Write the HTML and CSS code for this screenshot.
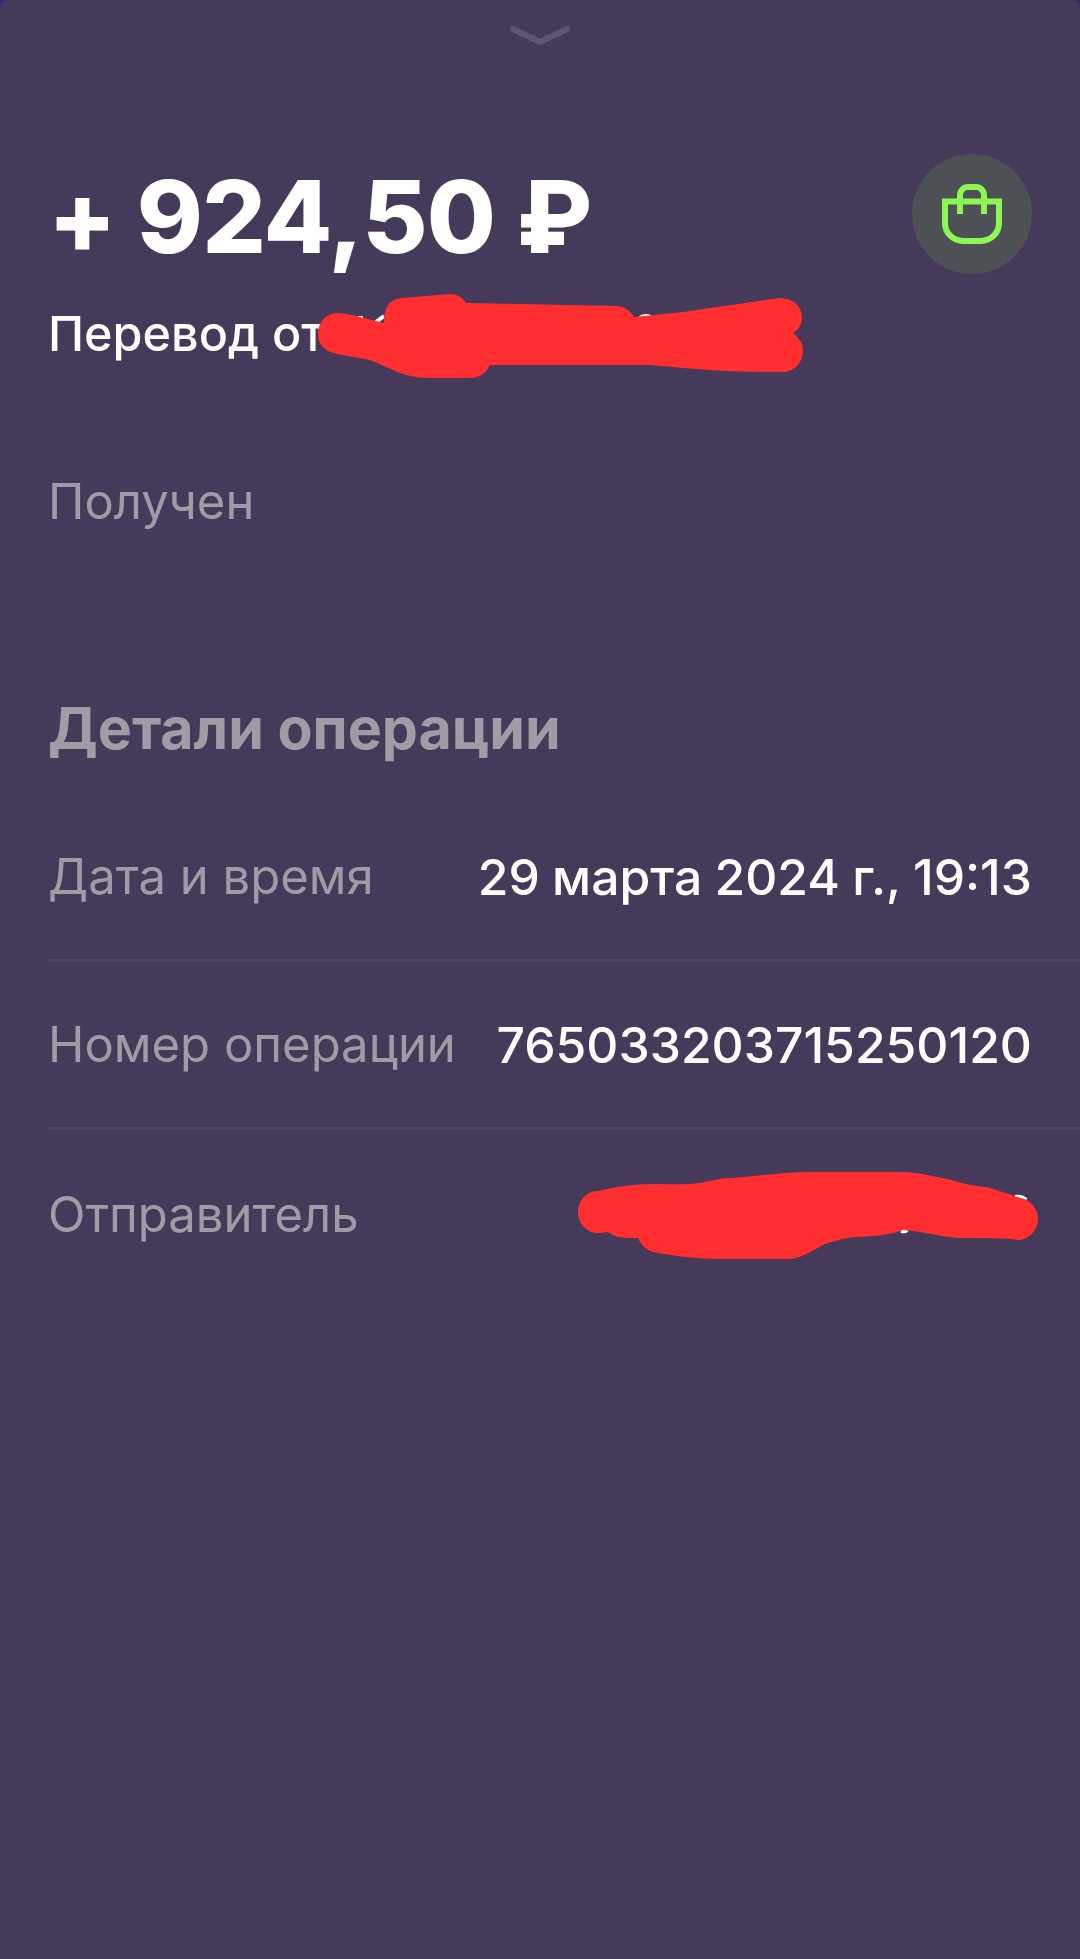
FILE: index.html
```html
<!DOCTYPE html>
<html lang="ru">
<head>
<meta charset="utf-8">
<title>Детали операции</title>
<link rel="stylesheet" href="styles.css">
</head>
<body>
<main class="sheet">
  <div class="grabber">
    <svg class="chevron" width="64" height="24" viewBox="0 0 64 24"><path d="M5 5 32 18 59 5"/></svg>
  </div>
  <header class="summary">
    <div class="amount-row">
      <h1 class="amount">+ 924,50 ₽</h1>
      <div class="category">
        <svg class="bag" width="60" height="60" viewBox="0 0 60 60">
          <path d="M3 17.5H57V39a18 18 0 0 1-18 18H21A18 18 0 0 1 3 39Z"/>
          <path d="M18 30V11a8 8 0 0 1 8-8h8a8 8 0 0 1 8 8V30"/>
        </svg>
      </div>
    </div>
    <p class="subject">Перевод от</p>
    <p class="status">Получен</p>
  </header>
  <section class="details">
    <h2 class="details-title">Детали операции</h2>
    <div class="row"><span class="label">Дата и время</span><span class="value">29 марта 2024 г., 19:13</span></div>
    <div class="row"><span class="label">Номер операции</span><span class="value">765033203715250120</span></div>
    <div class="row"><span class="label">Отправитель</span></div>
  </section>
  <svg class="scribbles" width="1080" height="1959" viewBox="0 0 1080 1959">
    <path class="peek" d="M358 318h5M376 322l8-6M640 318q6-4 12 0M1015 1197q7-1 11 3M901 1231q4 1 6-1"/>
    <path d="M318 335C318 320 328 313 338 313C352 314 368 319 384 323C384 306 390 299 402 298L450 294C458 294 463 298 466 303L617 306C625 307 631 311 634 317L683 312L780 298C794 298 802 307 802 318C802 325 798 330 793 333C799 338 803 343 803 350C803 363 794 372 783 372C745 372 715 371 683 368L650 365H490C486 373 480 378 470 378H427C405 378 388 367 370 360L337 354C326 352 318 345 318 335Z"/>
    <path d="M578 1212C578 1200 587 1191 598 1191C615 1187 635 1184 653 1184C670 1184 685 1185 700 1183C712 1180 722 1178 733 1178C760 1176 785 1172 810 1172H897C912 1172 925 1174 937 1177C955 1180 972 1187 987 1187C1000 1191 1014 1196 1027 1200C1033 1204 1038 1211 1038 1218C1038 1230 1029 1240 1018 1240C1005 1238 985 1238 960 1238C940 1237 922 1231 903 1230C890 1235 870 1237 853 1237C843 1239 833 1241 823 1245C812 1251 800 1259 787 1259H720C697 1259 675 1256 653 1252C646 1250 641 1245 638 1238C630 1238 624 1238 618 1237C614 1236 611 1234 608 1232C604 1233 601 1233 598 1233C587 1233 578 1224 578 1212Z"/>
  </svg>
</main>
</body>
</html>
```
FILE: styles.css
```css
* { box-sizing: border-box; }
html, body { margin: 0; padding: 0; }
body {
  background: #3a1c8c;
  font-family: Inter, "Noto Sans", sans-serif;
  color: #fff;
}
.sheet {
  position: relative;
  width: 1080px;
  height: 1959px;
  background: #453a59;
  border-radius: 6px 6px 0 0;
  overflow: hidden;
}
.grabber {
  display: flex;
  justify-content: center;
  height: 154px;
  padding-top: 24px;
}
.chevron { fill: none; stroke: #5f5573; stroke-width: 6; stroke-linecap: round; }
.summary { padding: 0 48px; }
.amount-row { display: flex; justify-content: space-between; align-items: center; height: 120px; }
.amount { margin: 6px 0 0; font-size: 100px; line-height: 120px; font-weight: 800; letter-spacing: -0.8px; }
.category {
  display: flex;
  align-items: center;
  justify-content: center;
  width: 120px;
  height: 120px;
  border-radius: 50%;
  background: #4d5054;
}
.bag { fill: none; stroke: #8cf752; stroke-width: 6; }
.subject { margin: 32px 0 0; font-size: 48.5px; line-height: 56px; font-weight: 500; }
.status { margin: 112px 0 0; font-size: 49px; line-height: 56px; color: #a09ca6; }
.details { margin-top: 164px; padding-left: 48px; }
.details-title { margin: 0 0 32px; font-size: 57.3px; line-height: 68px; font-weight: 700; color: #a09ca6; }
.row {
  display: flex;
  justify-content: space-between;
  align-items: center;
  height: 168px;
  padding-right: 48px;
  font-size: 49px;
  border-bottom: 3px solid #4f4563;
}
.row:last-child { border-bottom: 0; }
.label { color: #a09ca6; }
.value { font-size: 49.8px; font-weight: 500; word-spacing: -1px; }
.scribbles { position: absolute; left: 0; top: 0; fill: #ff2e30; }
.peek { fill: none; stroke: #fff; stroke-width: 4; }
```
